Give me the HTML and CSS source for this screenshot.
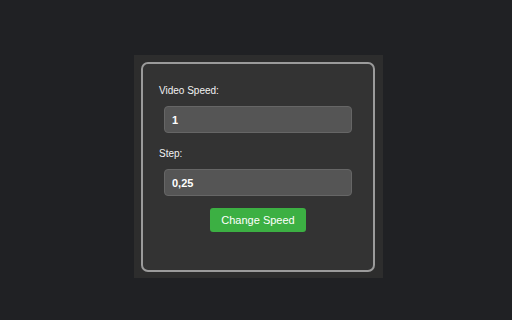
FILE: index.html
```html
<!DOCTYPE html>
<html>
<head>
<meta charset="utf-8">
<link rel="stylesheet" href="styles.css">
</head>
<body>
<div class="panel">
  <div class="box">
    <label class="label label-first" for="speed">Video Speed:</label>
    <input class="field" id="speed" type="text" value="1">
    <label class="label label-step" for="step">Step:</label>
    <input class="field" id="step" type="text" value="0,25">
    <button class="btn" type="button">Change Speed</button>
  </div>
</div>
</body>
</html>
```

FILE: styles.css
```css
html, body {
  margin: 0;
  padding: 0;
}
body {
  background: #202124;
  width: 512px;
  height: 320px;
  padding: 55px 0 0 134px;
  box-sizing: border-box;
  font-family: "Liberation Sans", Arial, sans-serif;
}
.panel {
  width: 249px;
  height: 223px;
  background: #2d2d2d;
  padding: 7px 8px 6px 7px;
  box-sizing: border-box;
}
.box {
  height: 100%;
  box-sizing: border-box;
  border: 2px solid #9b9b9b;
  border-radius: 7px;
  background: #333333;
  display: flex;
  flex-direction: column;
  align-items: center;
  padding: 21px 0 0 0;
}
.label {
  align-self: flex-start;
  margin-left: 16px;
  font-size: 10px;
  line-height: 12px;
  color: #f2f2f2;
}
.label-step {
  margin-top: 15px;
}
.field {
  margin-top: 9px;
  width: 188px;
  height: 27px;
  box-sizing: border-box;
  background: #555555;
  border: 1px solid #666666;
  border-radius: 4px;
  padding: 0 7px;
  color: #ffffff;
  font-family: "Liberation Sans", Arial, sans-serif;
  font-size: 11px;
  font-weight: bold;
  outline: none;
}
.btn {
  margin-top: 12px;
  width: 96px;
  height: 24px;
  background: #3cb043;
  border: none;
  border-radius: 3px;
  color: #ffffff;
  font-family: "Liberation Sans", Arial, sans-serif;
  font-size: 11px;
  padding: 0;
}
```
